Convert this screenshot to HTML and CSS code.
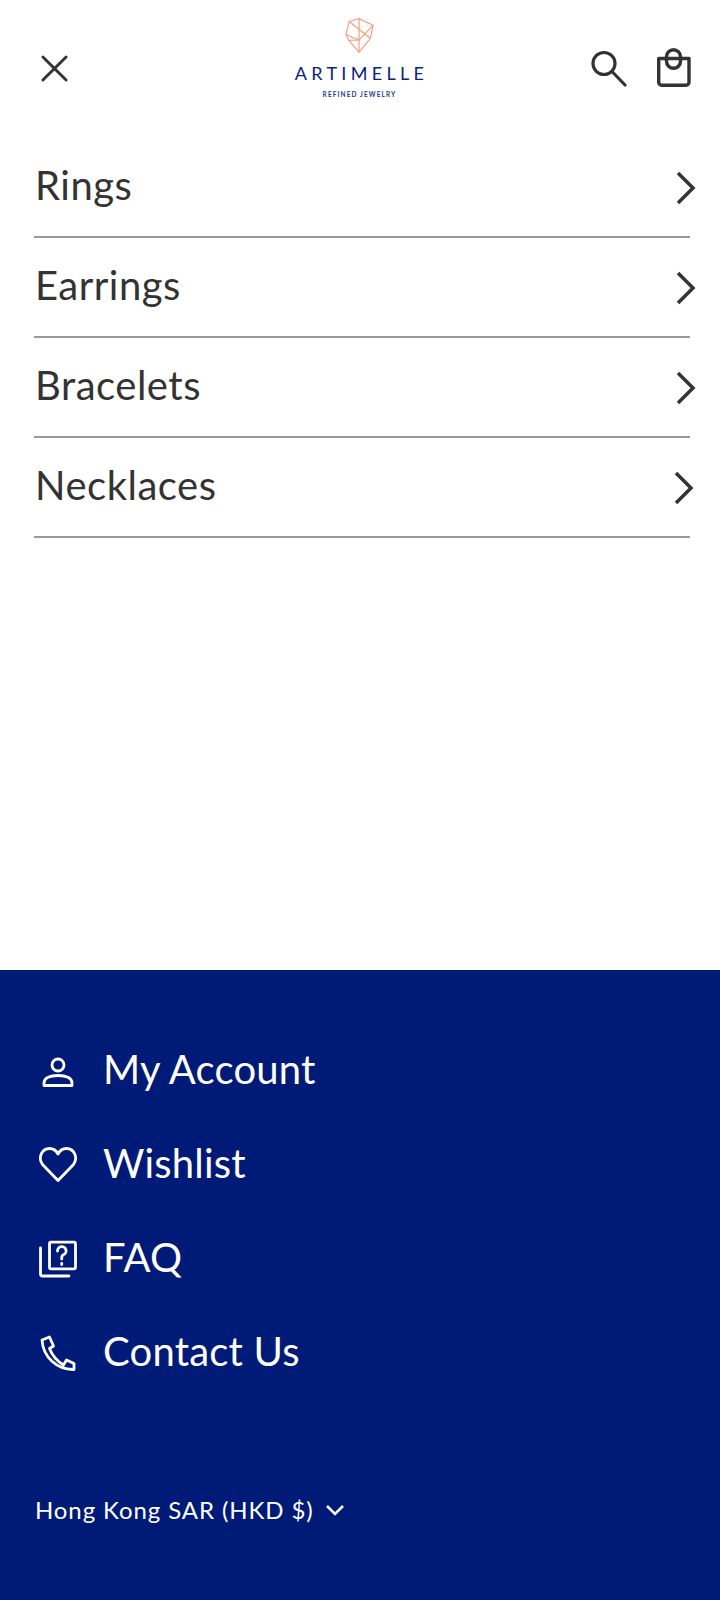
FILE: index.html
```html
<!DOCTYPE html>
<html lang="en">
<head>
<meta charset="utf-8">
<title>Artimelle</title>
<link rel="stylesheet" href="styles.css">
</head>
<body>
<div class="page">
  <header class="header">
    <svg class="icon-close" viewBox="0 0 28 28"><path d="M2 2 26 26M26 2 2 26"/></svg>
    <div class="logo">
      <svg class="logo-mark" viewBox="0 0 32 38"><path d="M15 1 4.500 4 1 18 4 24 15 37 27 22 30 8ZM15 1V37M4.500 4 27 22M1 18 15 24 30 8M4 24 15 24"/></svg>
      <div class="logo-name">ARTIMELLE</div>
      <div class="logo-tag">REFINED JEWELRY</div>
    </div>
    <div class="header-actions">
      <svg class="icon-search" viewBox="0 0 36 36"><circle cx="13" cy="12.500" r="11"/><path d="M21 20.500 34 34"/></svg>
      <svg class="icon-bag" viewBox="0 0 36 40"><path d="M2.700 10.500H33V34.300A3 3 0 0 1 30 37.300H5.700A3 3 0 0 1 2.700 34.300Z"/><path d="M10.500 10.500V8.700A7 7 0 0 1 24.500 8.700V10.500M10.500 10.500V13.300A7 7 0 0 0 24.500 13.300V10.500"/></svg>
    </div>
  </header>
  <nav class="menu">
    <a class="menu-row"><span>Rings</span><svg class="chev" viewBox="0 0 20 34"><path d="M2 2 17 17 2 32"/></svg></a>
    <a class="menu-row"><span>Earrings</span><svg class="chev" viewBox="0 0 20 34"><path d="M2 2 17 17 2 32"/></svg></a>
    <a class="menu-row"><span>Bracelets</span><svg class="chev" viewBox="0 0 20 34"><path d="M2 2 17 17 2 32"/></svg></a>
    <a class="menu-row"><span>Necklaces</span><svg class="chev chev-left" viewBox="0 0 20 34"><path d="M2 2 17 17 2 32"/></svg></a>
  </nav>
  <footer class="footer">
    <ul class="links">
      <li class="link"><span class="link-icon"><svg viewBox="0 0 38 38"><circle cx="19" cy="15" r="6"/><path d="M5 35.500V33C5 28 11 25.500 19 25.500S33 28 33 33V35.500Z"/></svg></span><span>My Account</span></li>
      <li class="link"><span class="link-icon"><svg viewBox="0 0 38 38"><path d="M19 36.500 3.500 20.500C-1.500 13.500 3 4.500 10.500 4.500 14.500 4.500 17.500 7 19 10 20.500 7 23.500 4.500 27.500 4.500 35 4.500 39.500 13.500 34.500 20.500Z"/></svg></span><span>Wishlist</span></li>
      <li class="link"><span class="link-icon"><svg viewBox="0 0 38 38"><rect x="10.500" y="4.200" width="26" height="26.600" rx="1.500"/><path d="M1.500 10V36A2 2 0 0 0 3.500 38H30"/><path d="M18.500 13A4.300 4.300 0 1 1 24 17C23 17.500 22.700 18.500 22.700 21"/><path d="M22.700 25.500V26.500"/></svg></span><span>FAQ</span></li>
      <li class="link"><span class="link-icon"><svg viewBox="0 0 38 38"><path d="M3 8 10.500 5 14.500 14 10.500 16.500C13 23 18 29 24.500 33L27.500 28 35 31.500V37.500C18 38 4 25 3 8Z"/></svg></span><span>Contact Us</span></li>
    </ul>
    <div class="locale"><span>Hong Kong SAR (HKD $)</span><svg class="locale-chev" viewBox="0 0 20 12"><path d="M2 2 10 10 18 2"/></svg></div>
  </footer>
</div>
</body>
</html>
```
FILE: styles.css
```css
* { box-sizing: border-box; }
html, body { margin: 0; padding: 0; }
body { font-family: "Lato", "Open Sans", sans-serif; background: #fff; }
.page { width: 720px; height: 1600px; display: flex; flex-direction: column; overflow: hidden; }
svg { display: block; fill: none; overflow: visible; }

.header { height: 138px; padding: 17px 28px 0 41px; display: grid; grid-template-columns: 1fr auto 1fr; align-items: start; }
.icon-close { width: 27px; height: 27px; margin-top: 38px; stroke: #333; stroke-width: 3; stroke-linecap: round; }
.logo { width: 140px; margin-right: 14px; display: flex; flex-direction: column; align-items: center; }
.logo-mark { width: 30px; height: 37px; stroke: #fb9a80; stroke-width: 1.200; stroke-linejoin: round; }
.logo-name { margin-top: 10px; font-size: 18px; line-height: 18px; letter-spacing: 4.300px; color: #0a2280; padding-left: 4px; white-space: nowrap; }
.logo-tag { margin-top: 9px; font-size: 6.500px; line-height: 8px; font-weight: 700; letter-spacing: 1.100px; color: #2a3c8e; white-space: nowrap; }
.header-actions { justify-self: end; display: flex; align-items: flex-start; gap: 29px; margin-top: 31px; }
.icon-search { width: 36px; height: 36px; margin-top: 3px; stroke: #333; stroke-width: 3.200; stroke-linecap: round; }
.icon-bag { width: 36px; height: 40px; stroke: #333; stroke-width: 3.400; stroke-linejoin: round; }

.menu { flex: 1; padding: 0 30px 0 34px; }
.menu-row { height: 100px; display: flex; align-items: center; justify-content: space-between; border-bottom: 2px solid #999; padding-left: 1px; font-size: 40px; letter-spacing: 0.500px; color: #333; }
.menu-row span { margin-bottom: 4px; }
.chev { width: 20px; height: 34px; margin-right: -6px; margin-top: 2px; stroke: #333; stroke-width: 3.500; }
.chev-left { margin-right: -4px; }

.footer { height: 630px; background: #001a78; color: #fff; padding: 52px 0 0 35px; }
.links { list-style: none; margin: 0; padding: 0; }
.link { height: 94px; display: flex; align-items: center; font-size: 40px; letter-spacing: 0.200px; }
.link-icon { width: 38px; height: 38px; margin-left: 4px; margin-right: 26px; }
.link-icon svg { width: 38px; height: 38px; stroke: #fff; stroke-width: 2.800; stroke-linejoin: round; stroke-linecap: round; }
.locale { margin-top: 97px; display: flex; align-items: center; gap: 11px; font-size: 24px; letter-spacing: 0.900px; }
.locale-chev { width: 20px; height: 12px; stroke: #fff; stroke-width: 2.500; }
```
